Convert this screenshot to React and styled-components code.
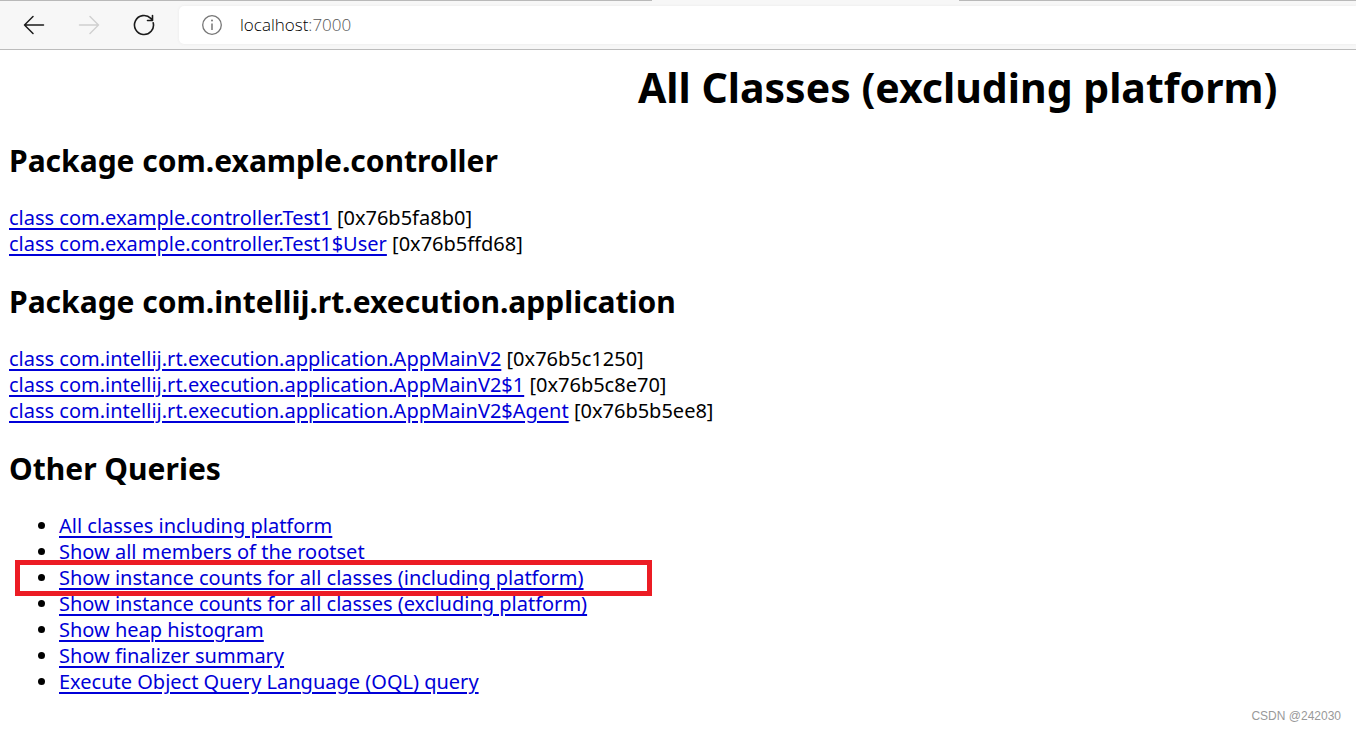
import React from "react";
import styled, { createGlobalStyle } from "styled-components";

const GlobalStyle = createGlobalStyle`
  * { box-sizing: border-box; }
  body {
    margin: 0;
    background: #fff;
    color: #000;
    font-family: "Noto Sans", "Open Sans", sans-serif;
    font-size: 20px;
    line-height: 26px;
  }
`;

const Page = styled.div`
  position: relative;
  min-height: 100vh;
  overflow-x: hidden;
`;

const BrowserBar = styled.header`
  background: #f7f7f7;
  border-bottom: 1px solid #bcbcbc;
`;

const TabEdge = styled.div`
  display: grid;
  grid-template-columns: 652fr 307fr 397fr;
  height: 1px;
`;

const EdgeLine = styled.span`
  background: ${(p) => (p.$open ? "transparent" : "#b9b9b9")};
`;

const Toolbar = styled.div`
  display: flex;
  align-items: center;
  height: 48px;
  padding-left: 18px;
`;

const ToolButton = styled.button`
  display: grid;
  place-items: center;
  width: 32px;
  height: 32px;
  margin-right: 23px;
  padding: 0;
  border: 0;
  background: transparent;
  color: ${(p) => (p.disabled ? "#d0d0d0" : "#1b1b1b")};
`;

const AddressBox = styled.div`
  display: flex;
  flex: 1;
  align-items: center;
  gap: 17px;
  height: 38px;
  margin-left: -4px;
  padding-left: 22px;
  border-radius: 5px 0 0 5px;
  background: #fff;
  box-shadow: 0 0 3px #e9e9e9;
  color: #767676;
`;

const Address = styled.div`
  font-family: "Open Sans", "Noto Sans", sans-serif;
  font-weight: 300;
  font-size: 17px;
  line-height: 24px;
  color: #555;
`;

const Host = styled.span`
  color: #000;
`;

const Content = styled.main`
  padding: 9px 8px 24px 9px;
`;

const Title = styled.h1`
  margin: 0;
  padding-left: 42%;
  padding-right: 4px;
  font-size: 41px;
  line-height: 57px;
  text-align: center;
  white-space: nowrap;
`;

const Heading = styled.h2`
  margin: 25px 0 24px;
  font-size: 30px;
  line-height: 40px;
`;

const Link = styled.a`
  color: #0000d8;
  text-decoration: underline;
  text-decoration-thickness: 2px;
  text-underline-offset: 3px;
`;

const QueryList = styled.ul`
  margin: 0;
  padding-left: 50px;
`;

const QueryItem = styled.li`
  position: relative;
`;

const Highlight = styled.span`
  position: absolute;
  z-index: 1;
  top: -5px;
  left: -44px;
  width: 637px;
  height: 36px;
  border: 5px solid #ec1c24;
  pointer-events: none;
`;

const Watermark = styled.small`
  position: absolute;
  right: 15px;
  bottom: 6px;
  font-family: "Liberation Sans", sans-serif;
  font-size: 12px;
  line-height: 16px;
  color: #999;
`;

const packages = [
  {
    name: "com.example.controller",
    classes: [
      ["Test1", "0x76b5fa8b0"],
      ["Test1$User", "0x76b5ffd68"],
    ],
  },
  {
    name: "com.intellij.rt.execution.application",
    classes: [
      ["AppMainV2", "0x76b5c1250"],
      ["AppMainV2$1", "0x76b5c8e70"],
      ["AppMainV2$Agent", "0x76b5b5ee8"],
    ],
  },
];

const queries = [
  { label: "All classes including platform" },
  { label: "Show all members of the rootset" },
  { label: "Show instance counts for all classes (including platform)", marked: true },
  { label: "Show instance counts for all classes (excluding platform)" },
  { label: "Show heap histogram" },
  { label: "Show finalizer summary" },
  { label: "Execute Object Query Language (OQL) query" },
];

function Arrow({ flip }) {
  return (
    <svg width="22" height="20" viewBox="0 0 22 20" fill="none" stroke="currentColor" strokeWidth="1.5" strokeLinecap="round" strokeLinejoin="round" aria-hidden="true">
      <path d={flip ? "M1.5 10H20.5M12 1.5L20.5 10L12 18.5" : "M20.5 10H1.5M10 1.5L1.5 10L10 18.5"} />
    </svg>
  );
}

function Reload() {
  return (
    <svg width="22" height="22" viewBox="0 0 22 22" fill="none" stroke="currentColor" strokeWidth="1.6" strokeLinecap="round" strokeLinejoin="round" aria-hidden="true">
      <path d="M20.2 8.7A9.5 9.5 0 1 1 17.8 4.4L19.5 6.2M19.5 1.5V6.5H14.5" />
    </svg>
  );
}

function Info() {
  return (
    <svg width="22" height="22" viewBox="0 0 22 22" fill="none" stroke="currentColor" strokeWidth="1.3" aria-hidden="true">
      <circle cx="11" cy="11" r="9.3" />
      <path d="M11 9.5V16" strokeWidth="1.5" />
      <circle cx="11" cy="6.6" r="1" fill="currentColor" stroke="none" />
    </svg>
  );
}

export default function App() {
  return (
    <Page>
      <GlobalStyle />
      <BrowserBar>
        <TabEdge>
          <EdgeLine />
          <EdgeLine $open />
          <EdgeLine />
        </TabEdge>
        <Toolbar>
          <ToolButton type="button" aria-label="Back"><Arrow /></ToolButton>
          <ToolButton type="button" aria-label="Forward" disabled><Arrow flip /></ToolButton>
          <ToolButton type="button" aria-label="Refresh"><Reload /></ToolButton>
          <AddressBox>
            <Info />
            <Address><Host>localhost</Host>:7000</Address>
          </AddressBox>
        </Toolbar>
      </BrowserBar>
      <Content>
        <Title>All Classes (excluding platform)</Title>
        {packages.map((pkg) => (
          <section key={pkg.name}>
            <Heading>Package {pkg.name}</Heading>
            {pkg.classes.map(([name, address]) => (
              <div key={name}>
                <Link href={`#${address}`}>{`class ${pkg.name}.${name}`}</Link>
                {` [${address}]`}
              </div>
            ))}
          </section>
        ))}
        <Heading>Other Queries</Heading>
        <QueryList>
          {queries.map(({ label, marked }) => (
            <QueryItem key={label}>
              <Link href="#query">{label}</Link>
              {marked && <Highlight />}
            </QueryItem>
          ))}
        </QueryList>
      </Content>
      <Watermark>CSDN @242030</Watermark>
    </Page>
  );
}
